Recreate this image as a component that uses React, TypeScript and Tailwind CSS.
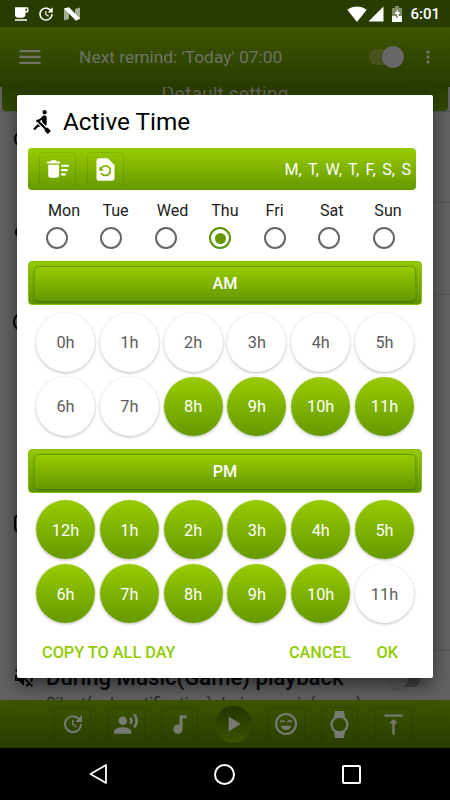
import type { ReactNode } from 'react'
import {
  MdAudiotrack,
  MdDeleteSweep,
  MdFreeBreakfast,
  MdMenu,
  MdMoreVert,
  MdPlayArrow,
  MdRecordVoiceOver,
  MdRestorePage,
  MdRowing,
  MdSignalCellular4Bar,
  MdSignalWifi4Bar,
  MdUpdate,
  MdVerticalAlignTop,
  MdVolumeOff,
  MdWatch,
} from 'react-icons/md'

const days = ['Mon', 'Tue', 'Wed', 'Thu', 'Fri', 'Sat', 'Sun']

const am = [0, 1, 2, 3, 4, 5, 6, 7, 8, 9, 10, 11].map((h) => ({ label: `${h}h`, on: h >= 8 }))
const pm = [12, 1, 2, 3, 4, 5, 6, 7, 8, 9, 10, 11].map((h) => ({ label: `${h}h`, on: h !== 11 }))

function StatusBar() {
  return (
    <div className="flex h-[27px] shrink-0 items-center bg-[#293c00] pl-3 pr-[10px] text-white">
      <MdFreeBreakfast className="size-[18px]" />
      <MdUpdate className="ml-[7px] size-[18px]" />
      <svg viewBox="0 0 16 14" className="ml-[9px] h-[14px] w-4">
        <path d="M0 1.5 5 .5V12L0 13.5zM11 2l5-1.5V12l-5 1.5z" fill="#a3ad91" />
        <path d="M0 1.5 5 .2 16 11.5 12 13.7z" fill="#fff" />
      </svg>
      <div className="flex-1" />
      <MdSignalWifi4Bar className="size-5" />
      <MdSignalCellular4Bar className="size-[18px]" />
      <svg viewBox="0 0 10 16" className="ml-[7px] h-4 w-[10px]">
        <path d="M3 0h4v2h3v8H0V2h3z" fill="#7f8a66" />
        <path d="M0 10h10v6H0z" fill="#fff" />
        <path d="M6 3 2.5 8H5v2h1l2-4H5.5z" fill="#fff" />
        <path d="M4.5 10H6l-1.5 2.5z" fill="#293c00" />
      </svg>
      <span className="ml-[8px] pt-px text-[15px] font-medium leading-none">6:01</span>
    </div>
  )
}

function LaughIcon() {
  return (
    <svg viewBox="0 0 24 24" className="size-[26px]" fill="none" stroke="currentColor" strokeWidth="2">
      <circle cx="12" cy="12" r="9.2" />
      <path d="M6.8 10.7c.5-2.3 3.2-2.3 3.7 0M13.500 10.700c.5-2.300 3.200-2.300 3.700 0" strokeWidth="1.6" />
      <path d="M7 13.5h10c-.7 2.5-2.7 4-5 4s-4.300-1.500-5-4z" fill="currentColor" stroke="none" />
    </svg>
  )
}

function ToolButton({ children }: { children: ReactNode }) {
  return (
    <div className="flex h-[35px] w-[37px] items-center justify-center rounded border border-b-transparent border-black/10">
      {children}
    </div>
  )
}

function Background() {
  return (
    <div className="flex h-full flex-col">
      <StatusBar />
      <div className="flex h-[60px] shrink-0 items-center bg-linear-to-b from-[#3e5500] to-[#293c00] text-[#707267]">
        <MdMenu className="ml-[16px] size-[28px]" />
        <span className="ml-[35px] mt-[2px] text-[17.4px] leading-none">Next remind: 'Today' 07:00</span>
        <div className="flex-1" />
        <div className="relative h-[22px] w-[35px]">
          <div className="absolute left-0 top-[3px] h-4 w-[30px] rounded-full bg-[#46531f]" />
          <div className="absolute right-0 top-0 size-[22px] rounded-full bg-[#686868] shadow" />
        </div>
        <MdMoreVert className="ml-[14px] mr-[12px] size-5" />
      </div>
      <div className="relative flex-1 overflow-hidden bg-[#626262]">
        <div className="mx-[2px] h-6 rounded-b bg-linear-to-b from-[#293c00] to-[#324a00] text-center text-[19.5px] leading-[15px] text-[#626657]">
          Default setting
        </div>
        <div className="h-px bg-[#555]" />
        <div className="ml-11 h-[91px] border-b border-[#555]" />
        <div className="ml-11 h-[92px] border-b border-[#555]" />
        <div className="ml-11 h-[356px] border-b border-[#555]" />
        {/* row icons peeking out from behind the dialog */}
        <div className="absolute left-[14px] top-[44px] size-[16px] rounded-full border-2 border-black" />
        <div className="absolute left-[15px] top-[138px] size-[14px] rounded-full border-2 border-black" />
        <div className="absolute left-[13px] top-[225px] size-[20px] rounded-full border-2 border-black" />
        <div className="absolute left-[14px] top-[428px] h-[17px] w-[16px] rounded-sm border-2 border-black" />
        <MdVolumeOff className="absolute left-[12px] top-[579px] size-6 text-black" />
        <div className="absolute left-[46px] top-[577px] whitespace-nowrap text-[22.1px] font-medium leading-[27px] text-[#05080f]">
          During Music(Game) playback
        </div>
        <div className="absolute left-[46px] top-[606px] whitespace-nowrap text-[16.2px] leading-[22px] text-[#252525]">
          Silent(only notification) during music(game)
        </div>
        <div className="absolute left-[391px] top-[586px] h-[14px] w-[29px] rounded-full bg-[#474747]" />
        <div className="absolute left-[387px] top-[581px] size-[21px] rounded-full bg-[#606060] shadow" />
      </div>
      <div className="flex h-12 shrink-0 items-center justify-center gap-[16.4px] bg-linear-to-b from-[#3e5500] to-[#293c00] pl-4 text-[#777973]">
        <ToolButton><MdUpdate className="size-6" /></ToolButton>
        <ToolButton><MdRecordVoiceOver className="size-[26px]" /></ToolButton>
        <ToolButton><MdAudiotrack className="size-[25px]" /></ToolButton>
        <div className="flex size-[37px] items-center justify-center rounded-full bg-linear-to-b from-[#243500] to-[#3b5200]">
          <MdPlayArrow className="size-[26px]" />
        </div>
        <ToolButton><LaughIcon /></ToolButton>
        <ToolButton><MdWatch className="size-[27px]" /></ToolButton>
        <ToolButton><MdVerticalAlignTop className="size-[27px]" /></ToolButton>
      </div>
      <div className="flex h-[52px] shrink-0 items-center justify-between bg-black pl-[87px] pr-[89px]">
        <svg viewBox="0 0 20 22" className="h-[22px] w-5" fill="none" stroke="#fff" strokeWidth="1.8" strokeLinejoin="round">
          <path d="M19 2v18L3.5 11z" />
        </svg>
        <div className="size-[21px] rounded-full border-2 border-white" />
        <div className="size-[19px] rounded-[2px] border-2 border-white" />
      </div>
    </div>
  )
}

function Period({ title }: { title: string }) {
  return (
    <div className="ml-[11px] h-[44px] w-[394px] rounded border border-[#84bd08] bg-linear-to-b from-[#94ca00] to-[#5e9200] px-[5px] pt-1">
      <div className="flex h-[35px] w-full items-center justify-center rounded-[5px] border border-[#659c00] bg-linear-to-b from-[#99cc00] to-[#669900] pt-[2px] text-[16.2px] font-medium text-white shadow-[0_1px_2px_rgba(0,0,0,0.3)]">
        {title}
      </div>
    </div>
  )
}

function Hours({ hours }: { hours: { label: string; on: boolean }[] }) {
  return (
    <div className="ml-[19px] grid w-[379px] grid-cols-[repeat(6,59px)] gap-x-[4.8px] gap-y-[5px]">
      {hours.map((h) => (
        <div
          key={h.label}
          className={`flex size-[59px] items-center justify-center rounded-full pt-[3px] text-[16.3px] shadow-[0_1px_3px_rgba(0,0,0,0.27)] ${
            h.on ? 'bg-linear-to-b from-[#99cc00] to-[#669900] text-white' : 'bg-white text-[#5c5c5c]'
          }`}
        >
          {h.label}
        </div>
      ))}
    </div>
  )
}

function ActiveTimeDialog() {
  return (
    <div className="absolute left-[17px] top-[95px] h-[583px] w-[416px] rounded-[2px] bg-white shadow-[0_8px_18px_rgba(0,0,0,0.5)]">
      <div className="flex h-[53px] items-center pl-[12px] text-black">
        <MdRowing className="size-[25px]" />
        <h1 className="ml-[9px] mt-[2px] text-[24.3px] leading-none">Active Time</h1>
      </div>
      <div className="ml-[11px] flex h-[42px] w-[388px] items-center rounded bg-linear-to-b from-[#99cc00] to-[#669900] pl-[11px] pr-[5px] text-white">
        <ToolButton><MdDeleteSweep className="size-[26px]" /></ToolButton>
        <div className="w-[11px]" />
        <ToolButton><MdRestorePage className="size-[27px]" /></ToolButton>
        <span className="ml-auto whitespace-pre pt-[2px] text-[16px] [word-spacing:-0.7px]">M,  T,  W,  T,  F,  S,  S</span>
      </div>
      <div className="ml-[31px] mt-[10px] flex">
        {days.map((day) => (
          <div key={day} className="h-[22px] w-[54.4px] text-[16.1px] leading-[21px] text-[#222]">
            {day}
          </div>
        ))}
      </div>
      <div className="ml-[28.500px] mt-[5px] flex">
        {days.map((day) => (
          <div key={day} className="w-[54.6px]">
            <div
              className={`flex size-[22px] items-center justify-center rounded-full border-2 ${
                day === 'Thu' ? 'border-[#559500]' : 'border-[#666]'
              }`}
            >
              {day === 'Thu' && <div className="size-[11px] rounded-full bg-[#669900]" />}
            </div>
          </div>
        ))}
      </div>
      <div className="h-[12px]" />
      <Period title="AM" />
      <div className="h-[7.5px]" />
      <Hours hours={am} />
      <div className="h-[13.5px]" />
      <Period title="PM" />
      <div className="h-[7px]" />
      <Hours hours={pm} />
      <div className="mt-[18px] flex pl-[25px] pr-[35px] text-[16.3px] font-medium leading-6 text-[#8fcc00]">
        <span>COPY TO ALL DAY</span>
        <span className="ml-auto">CANCEL</span>
        <span className="ml-[26px]">OK</span>
      </div>
    </div>
  )
}

export default function App() {
  return (
    <div className="relative h-[800px] w-[450px] overflow-hidden font-[Roboto,sans-serif]">
      <Background />
      <ActiveTimeDialog />
    </div>
  )
}
